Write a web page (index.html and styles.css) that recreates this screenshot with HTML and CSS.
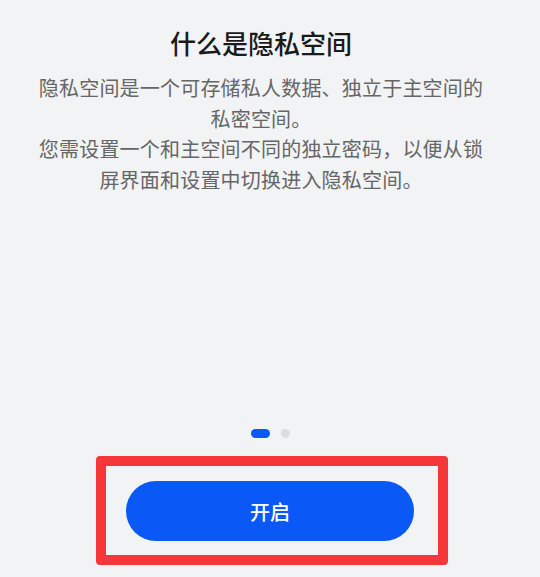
FILE: index.html
```html
<!DOCTYPE html>
<html lang="zh-CN">
<head>
    <meta charset="UTF-8">
    <meta name="viewport" content="width=device-width, initial-scale=1.0">
    <title>隐私空间</title>
    <link rel="stylesheet" href="styles.css">
</head>
<body>
    <div class="page">
        <div class="intro">
            <h1 class="title">什么是隐私空间</h1>
            <p class="desc">隐私空间是一个可存储私人数据、独立于主空间的私密空间。</p>
            <p class="desc">您需设置一个和主空间不同的独立密码，以便从锁屏界面和设置中切换进入隐私空间。</p>
        </div>

        <div class="bottom">
            <div class="dots">
                <span class="dot active"></span>
                <span class="dot"></span>
            </div>
            <div class="highlight">
                <button class="start">开启</button>
            </div>
        </div>
    </div>
</body>
</html>
```

FILE: styles.css
```css
* {
    margin: 0;
    padding: 0;
    box-sizing: border-box;
}

body {
    background: #f1f3f5;
    font-family: "Noto Sans CJK SC", "Noto Sans", sans-serif;
}

.page {
    height: 577px;
    display: flex;
    flex-direction: column;
    align-items: center;
}

.intro {
    width: 450px;
    margin-right: 18px;
    padding-top: 26px;
    text-align: center;
}

.title {
    font-size: 26px;
    line-height: 34px;
    font-weight: 500;
    color: #1a1a1a;
    margin-bottom: 13px;
}

.desc {
    font-size: 20px;
    line-height: 30.7px;
    letter-spacing: 0.2px;
    color: #666;
}

.bottom {
    margin-top: auto;
    margin-bottom: 12px;
    display: flex;
    flex-direction: column;
    align-items: center;
}

.dots {
    display: flex;
    gap: 11px;
    align-items: center;
    margin-bottom: 18px;
    padding-left: 1px;
}

.dot {
    width: 9px;
    height: 9px;
    border-radius: 50%;
    background: #dcdde0;
}

.dot.active {
    width: 19px;
    border-radius: 5px;
    background: #0a59f7;
}

.highlight {
    width: 352px;
    height: 109px;
    border: 10px solid #f5373a;
    border-radius: 4px;
    padding: 15px 0 0 20px;
    margin-left: 4px;
}

.start {
    width: 288px;
    height: 60px;
    border: none;
    border-radius: 30px;
    background: #0a59f7;
    color: #fff;
    font-family: inherit;
    font-size: 20px;
    font-weight: 500;
    cursor: pointer;
}
```
